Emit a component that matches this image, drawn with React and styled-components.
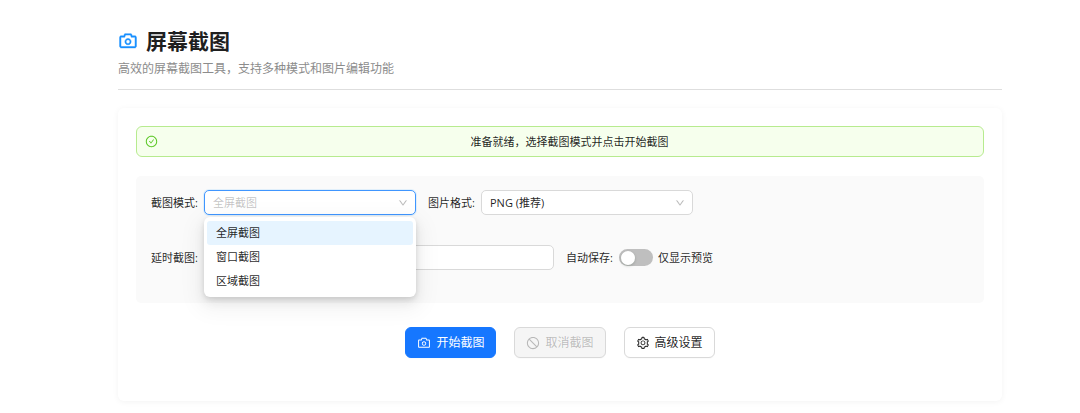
import React, { useState } from "react";
import styled, { createGlobalStyle } from "styled-components";
import {
  AiOutlineCamera,
  AiOutlineCheckCircle,
  AiOutlineDown,
  AiOutlineSetting,
  AiOutlineStop,
} from "react-icons/ai";

const modes = [
  { value: "fullscreen", label: "全屏截图" },
  { value: "window", label: "窗口截图" },
  { value: "region", label: "区域截图" },
];

export default function App() {
  const [mode, setMode] = useState("fullscreen");
  const [open, setOpen] = useState(true);

  const toggleMenu = (e) => {
    e.preventDefault();
    setOpen(!open);
  };

  const pickMode = (value) => {
    setMode(value);
    setOpen(false);
  };

  return (
    <Page>
      <GlobalStyle />
      <Header>
        <Title>
          <AiOutlineCamera />
          屏幕截图
        </Title>
        <Subtitle>高效的屏幕截图工具，支持多种模式和图片编辑功能</Subtitle>
      </Header>
      <Card>
        <Alert role="status">
          <AiOutlineCheckCircle />
          <p>准备就绪，选择截图模式并点击开始截图</p>
        </Alert>
        <Settings>
          <Row>
            <Field>
              <Label htmlFor="mode">截图模式:</Label>
              <SelectBox>
                <Select
                  id="mode"
                  value={mode}
                  $open={open}
                  onMouseDown={toggleMenu}
                  onChange={(e) => pickMode(e.target.value)}
                >
                  {modes.map((m) => (
                    <option key={m.value} value={m.value}>
                      {m.label}
                    </option>
                  ))}
                </Select>
                <AiOutlineDown />
                {open && (
                  <Menu role="listbox" aria-label="截图模式">
                    {modes.map((m) => (
                      <MenuItem
                        key={m.value}
                        role="option"
                        aria-selected={m.value === mode}
                        $active={m.value === mode}
                        onClick={() => pickMode(m.value)}
                      >
                        {m.label}
                      </MenuItem>
                    ))}
                  </Menu>
                )}
              </SelectBox>
            </Field>
            <Field>
              <Label htmlFor="format">图片格式:</Label>
              <SelectBox>
                <Select id="format" defaultValue="png">
                  <option value="png">PNG (推荐)</option>
                </Select>
                <AiOutlineDown />
              </SelectBox>
            </Field>
          </Row>
          <Row>
            <Field>
              <Label htmlFor="delay">延时截图:</Label>
              <Input id="delay" type="text" />
            </Field>
            <Field>
              <Label htmlFor="autosave">自动保存:</Label>
              <Switch id="autosave" type="checkbox" role="switch" />
              <SwitchText>仅显示预览</SwitchText>
            </Field>
          </Row>
        </Settings>
        <Actions>
          <Button $primary>
            <AiOutlineCamera />
            开始截图
          </Button>
          <Button disabled>
            <AiOutlineStop />
            取消截图
          </Button>
          <Button>
            <AiOutlineSetting />
            高级设置
          </Button>
        </Actions>
      </Card>
    </Page>
  );
}

const GlobalStyle = createGlobalStyle`
  * {
    box-sizing: border-box;
  }
  body {
    margin: 0;
    background: #fff;
    color: rgba(0, 0, 0, 0.88);
    font-family: "Open Sans", "Noto Sans CJK SC", sans-serif;
    font-size: 11px;
    line-height: 17px;
  }
  button, input, select {
    font: inherit;
    color: inherit;
  }
`;

const Page = styled.main`
  padding: 26px 78px 12px 118px;
`;

const Header = styled.header`
  padding-bottom: 11px;
  border-bottom: 1px solid #dedede;
`;

const Title = styled.h1`
  display: flex;
  align-items: center;
  gap: 8px;
  margin: 0;
  font-size: 21px;
  line-height: 30px;
  font-weight: 700;
  svg {
    width: 20px;
    height: 20px;
    color: #1890ff;
    stroke-width: 24;
  }
`;

const Subtitle = styled.p`
  margin: 4px 0 0;
  font-size: 12px;
  line-height: 18px;
  color: #8c8c8c;
`;

const Card = styled.section`
  margin-top: 18px;
  padding: 18px 18px 43px;
  border-radius: 6px;
  background: #fff;
  box-shadow: 0 1px 6px rgba(0, 0, 0, 0.05);
`;

const Alert = styled.div`
  display: flex;
  align-items: center;
  gap: 6px;
  padding: 6px 8px;
  border: 1px solid #b7eb8f;
  border-radius: 6px;
  background: #f6ffed;
  svg {
    width: 13px;
    height: 13px;
    color: #52c41a;
  }
  p {
    flex: 1;
    margin: 0;
    text-align: center;
  }
`;

const Settings = styled.form`
  display: flex;
  flex-direction: column;
  gap: 30px;
  margin-top: 19px;
  padding: 14px 15px 33px;
  border-radius: 5px;
  background: #fafafa;
`;

const Row = styled.div`
  display: flex;
  flex-wrap: wrap;
  gap: 12px;
`;

const Field = styled.div`
  display: flex;
  align-items: center;
  height: 25px;
`;

const Label = styled.label`
  width: 53px;
  white-space: nowrap;
`;

const SelectBox = styled.div`
  position: relative;
  width: 212px;
  > svg {
    position: absolute;
    top: 8px;
    right: 8px;
    width: 10px;
    height: 10px;
    color: rgba(0, 0, 0, 0.25);
    stroke-width: 30;
    pointer-events: none;
  }
`;

const Select = styled.select`
  display: block;
  width: 100%;
  height: 25px;
  padding: 0 24px 0 8px;
  border: 1px solid ${(p) => (p.$open ? "#4096ff" : "#d9d9d9")};
  border-radius: 5px;
  background: #fff;
  color: ${(p) => (p.$open ? "rgba(0, 0, 0, 0.25)" : "inherit")};
  box-shadow: ${(p) => (p.$open ? "0 0 0 1px rgba(5, 145, 255, 0.1)" : "none")};
  appearance: none;
  outline: none;
`;

const Menu = styled.ul`
  position: absolute;
  top: calc(100% + 2px);
  left: 0;
  right: 0;
  z-index: 1;
  margin: 0;
  padding: 4px 3px;
  list-style: none;
  border-radius: 6px;
  background: #fff;
  box-shadow: 0 5px 12px rgba(0, 0, 0, 0.08), 0 2px 5px rgba(0, 0, 0, 0.1),
    0 7px 22px 6px rgba(0, 0, 0, 0.05);
`;

const MenuItem = styled.li`
  padding: 0 9px;
  line-height: 24px;
  border-radius: 3px;
  background: ${(p) => (p.$active ? "#e6f4ff" : "transparent")};
  cursor: pointer;
`;

const Input = styled.input`
  width: 350px;
  height: 25px;
  padding: 0 8px;
  border: 1px solid #d9d9d9;
  border-radius: 5px;
  background: #fff;
  outline: none;
`;

const Switch = styled.input`
  appearance: none;
  display: flex;
  align-items: center;
  width: 34px;
  height: 17px;
  margin: 0;
  padding: 0 2px;
  border-radius: 9px;
  background: #bfbfbf;
  cursor: pointer;
  &::before {
    content: "";
    width: 14px;
    height: 14px;
    border-radius: 50%;
    background: #fff;
    box-shadow: 0 1px 3px rgba(0, 35, 11, 0.2);
  }
  &:checked {
    justify-content: flex-end;
    background: #1677ff;
  }
`;

const SwitchText = styled.span`
  margin-left: 5px;
`;

const Actions = styled.div`
  display: flex;
  justify-content: center;
  gap: 18px;
  margin-top: 24px;
`;

const Button = styled.button`
  display: flex;
  align-items: center;
  gap: 5px;
  height: 31px;
  padding: 0 11px;
  border: 1px solid ${(p) => (p.$primary ? "#1677ff" : "#d9d9d9")};
  border-radius: 6px;
  background: ${(p) => (p.$primary ? "#1677ff" : "#fff")};
  color: ${(p) => (p.$primary ? "#fff" : "inherit")};
  font-size: 12px;
  box-shadow: 0 1px 1px rgba(0, 0, 0, 0.02);
  cursor: pointer;
  svg {
    width: 14px;
    height: 14px;
  }
  &:disabled {
    background: #f5f5f5;
    color: rgba(0, 0, 0, 0.25);
    cursor: not-allowed;
  }
`;
